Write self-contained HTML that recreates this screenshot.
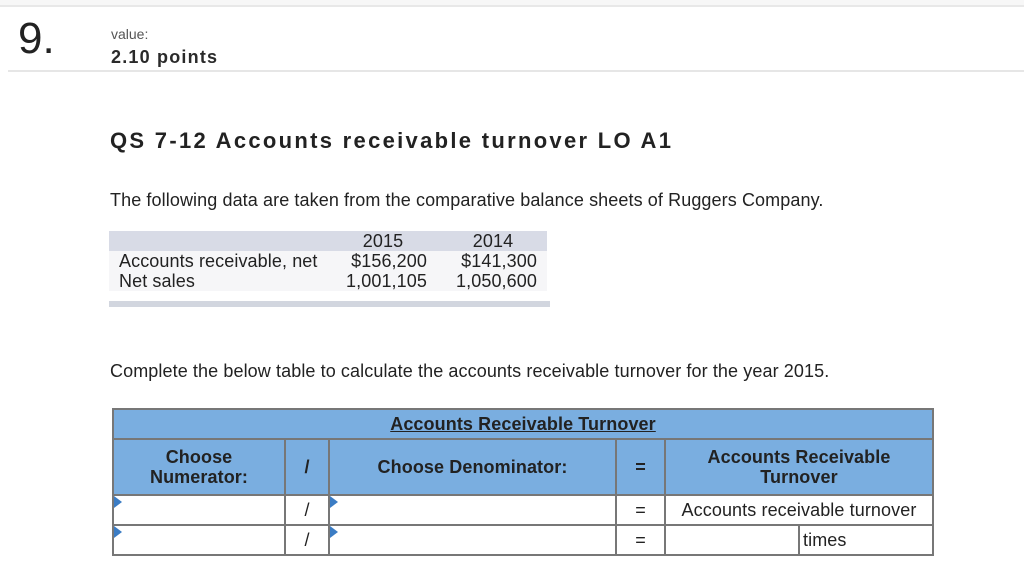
<!DOCTYPE html>
<html><head><style>
body{margin:0;width:1024px;height:574px;background:#fff;position:relative;overflow:hidden;font-family:"Liberation Sans",Arial,sans-serif;color:#222}
.a{position:absolute}
.t{font-size:18px;letter-spacing:0.1px;line-height:20px}
.c{position:absolute;border:2px solid #777;box-sizing:border-box;display:flex;align-items:center;justify-content:center;text-align:center;font-size:18px;letter-spacing:0.1px}
.h{background:#7aaee0;font-weight:bold;color:#222;line-height:20px}
.tri{position:absolute;width:0;height:0;border-top:6px solid transparent;border-bottom:6px solid transparent;border-left:8px solid #3b7cc4}
</style></head><body>
<div class="a" style="left:0;top:0;width:1024px;height:5px;background:#f7f7f7"></div>
<div class="a" style="left:0;top:5px;width:1024px;height:2px;background:#e8e8e8"></div>
<div class="a" style="left:18px;top:14px;font-size:44px;color:#222">9.</div>
<div class="a" style="left:111px;top:26px;font-size:14px;color:#555">value:</div>
<div class="a" style="left:111px;top:47px;font-size:18px;font-weight:bold;letter-spacing:1.2px;color:#2a2a2a">2.10 points</div>
<div class="a" style="left:8px;top:70px;width:1016px;height:2px;background:#e6e6e6"></div>
<div class="a" style="left:110px;top:128px;font-size:22px;font-weight:bold;letter-spacing:2.3px;color:#222">QS 7-12 Accounts receivable turnover LO A1</div>
<div class="a t" style="left:110px;top:190px">The following data are taken from the comparative balance sheets of Ruggers Company.</div>
<div class="a" style="left:109px;top:231px;width:438px;height:20px;background:#d8dbe6"></div>
<div class="a" style="left:109px;top:251px;width:438px;height:40px;background:#f6f6f8"></div>
<div class="a" style="left:109px;top:301px;width:441px;height:6px;background:#d2d6df"></div>
<div class="a t" style="left:343px;top:231px;width:80px;text-align:center">2015</div>
<div class="a t" style="left:453px;top:231px;width:80px;text-align:center">2014</div>
<div class="a t" style="left:119px;top:251px">Accounts receivable, net</div>
<div class="a t" style="left:119px;top:271px">Net sales</div>
<div class="a t" style="left:317px;top:251px;width:110px;text-align:right">$156,200</div>
<div class="a t" style="left:427px;top:251px;width:110px;text-align:right">$141,300</div>
<div class="a t" style="left:317px;top:271px;width:110px;text-align:right">1,001,105</div>
<div class="a t" style="left:427px;top:271px;width:110px;text-align:right">1,050,600</div>
<div class="a t" style="left:110px;top:361px">Complete the below table to calculate the accounts receivable turnover for the year 2015.</div>

<div class="c h" style="left:112px;top:408px;width:822px;height:32px"><span style="text-decoration:underline">Accounts Receivable Turnover</span></div>
<div class="c h" style="left:112px;top:438px;width:174px;height:58px">Choose<br>Numerator:</div>
<div class="c h" style="left:284px;top:438px;width:46px;height:58px">/</div>
<div class="c h" style="left:328px;top:438px;width:289px;height:58px">Choose Denominator:</div>
<div class="c h" style="left:615px;top:438px;width:51px;height:58px">=</div>
<div class="c h" style="left:664px;top:438px;width:270px;height:58px">Accounts Receivable<br>Turnover</div>

<div class="c" style="left:112px;top:494px;width:174px;height:32px"></div>
<div class="c" style="left:284px;top:494px;width:46px;height:32px">/</div>
<div class="c" style="left:328px;top:494px;width:289px;height:32px"></div>
<div class="c" style="left:615px;top:494px;width:51px;height:32px">=</div>
<div class="c" style="left:664px;top:494px;width:270px;height:32px">Accounts receivable turnover</div>

<div class="c" style="left:112px;top:524px;width:174px;height:32px"></div>
<div class="c" style="left:284px;top:524px;width:46px;height:32px">/</div>
<div class="c" style="left:328px;top:524px;width:289px;height:32px"></div>
<div class="c" style="left:615px;top:524px;width:51px;height:32px">=</div>
<div class="c" style="left:664px;top:524px;width:136px;height:32px"></div>
<div class="c" style="left:798px;top:524px;width:136px;height:32px;justify-content:flex-start;padding-left:3px">times</div>

<div class="tri" style="left:114px;top:496px"></div>
<div class="tri" style="left:330px;top:496px"></div>
<div class="tri" style="left:114px;top:526px"></div>
<div class="tri" style="left:330px;top:526px"></div>
</body></html>
